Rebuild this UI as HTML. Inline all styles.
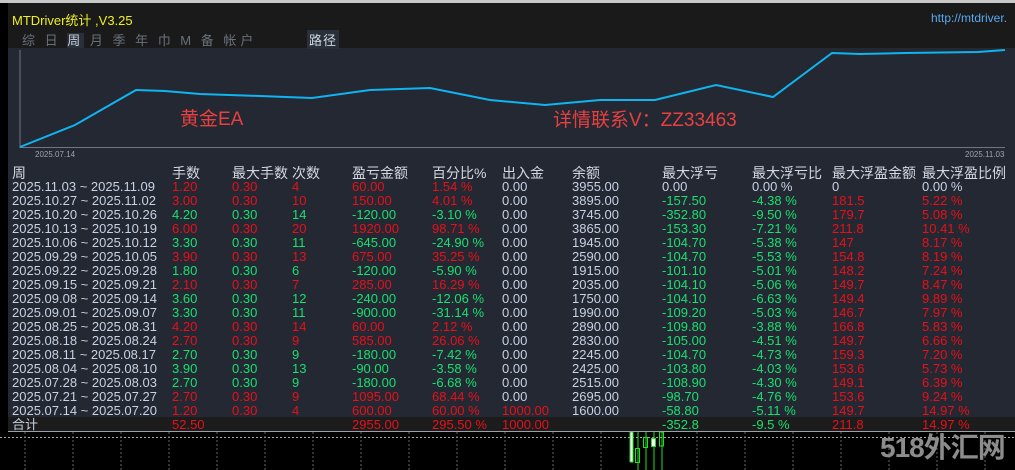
<!DOCTYPE html><html><head><meta charset="utf-8"><style>
*{margin:0;padding:0;box-sizing:border-box}
body{width:1015px;height:470px;background:#000;position:relative;overflow:hidden;font-family:"Liberation Sans","Noto Sans CJK SC",sans-serif}
.a{position:absolute}
#panel{left:8px;top:3px;width:1007px;height:429px;background:#232832;border-bottom:1px solid #9aa0a8}
.row{position:absolute;left:12px;height:14px;line-height:14px;font-size:13px;white-space:nowrap;color:#c8d2e4}
.row span{position:absolute;top:0}
.r{color:#e8101a}.g{color:#18e070}
.hd{font-size:14px;color:#d4d8e0}
.c1{left:160px}.c2{left:220px}.c3{left:280px}.c4{left:340px}.c5{left:420px}.c6{left:490px}.c7{left:560px}.c8{left:650px}.c9{left:740px}.c10{left:820px}.c11{left:910px}
</style></head><body>
<div class="a" style="left:0;top:0;width:1015px;height:3px;background:#c8c8c8"></div>
<div class="a" id="panel"></div>
<div class="a" style="left:8px;top:3px;width:1007px;height:45px;background:#1a1a1a"></div>
<div class="a" style="left:12px;top:10px;font-size:13px;color:#f0f020">MTDriver统计 ,V3.25</div>
<div class="a" style="left:931px;top:11px;font-size:12px;color:#5aa8f0">http://mtdriver.</div>
<div class="a" style="left:22px;top:30px;font-size:13px;color:#6a707a;letter-spacing:4px;word-spacing:-2px">综 日 <span style="background:#2a303a;color:#c8d0dc">周</span> 月 季 年 巾 M 备 帐户</div>
<div class="a" style="left:307px;top:30px;font-size:13px;color:#d0d6e0;background:#2a303a;padding:0 2px;letter-spacing:1px">路径</div>
<div class="a" style="left:0;top:3px;width:8px;height:429px;background:#000"></div>
<svg class="a" style="left:0;top:0" width="1015" height="170">
<line x1="20" y1="50" x2="20" y2="148" stroke="#707680"/>
<line x1="20" y1="147.5" x2="1005" y2="147.5" stroke="#707680"/>
<polyline fill="none" stroke="#10b4f0" stroke-width="2" points="20,147 75,125 136,90 165,91 200,94 260,96 312,98 370,90 430,88 490,100 545,105 600,100 655,100 716,85 773,97 832,53 860,54 905,53 978,52 1005,50"/>
<text x="35" y="157" font-size="8" fill="#a0a4aa" font-family="Liberation Sans">2025.07.14</text>
<text x="965" y="157" font-size="8" fill="#a0a4aa" font-family="Liberation Sans">2025.11.03</text>
</svg>
<div class="a" style="left:180px;top:104px;font-size:19px;color:#e84040">黄金EA</div>
<div class="a" style="left:553px;top:105px;font-size:19px;color:#e84040">详情联系V：ZZ33463</div>
<div class="row hd" style="top:165px;height:16px;line-height:16px"><span style="left:0">周</span><span class="c1">手数</span><span class="c2">最大手数</span><span class="c3">次数</span><span class="c4">盈亏金额</span><span class="c5">百分比%</span><span class="c6">出入金</span><span class="c7">余额</span><span class="c8">最大浮亏</span><span class="c9">最大浮亏比</span><span class="c10">最大浮盈金额</span><span class="c11">最大浮盈比例</span></div>
<div class="row" style="top:180px"><span>2025.11.03 ~ 2025.11.09</span><span class="c1 r">1.20</span><span class="c2 r">0.30</span><span class="c3 r">4</span><span class="c4 r">60.00</span><span class="c5 r">1.54 %</span><span class="c6">0.00</span><span class="c7">3955.00</span><span class="c8">0.00</span><span class="c9">0.00 %</span><span class="c10">0</span><span class="c11">0.00 %</span></div>
<div class="row" style="top:194px"><span>2025.10.27 ~ 2025.11.02</span><span class="c1 r">3.00</span><span class="c2 r">0.30</span><span class="c3 r">10</span><span class="c4 r">150.00</span><span class="c5 r">4.01 %</span><span class="c6">0.00</span><span class="c7">3895.00</span><span class="c8 g">-157.50</span><span class="c9 g">-4.38 %</span><span class="c10 r">181.5</span><span class="c11 r">5.22 %</span></div>
<div class="row" style="top:208px"><span>2025.10.20 ~ 2025.10.26</span><span class="c1 g">4.20</span><span class="c2 g">0.30</span><span class="c3 g">14</span><span class="c4 g">-120.00</span><span class="c5 g">-3.10 %</span><span class="c6">0.00</span><span class="c7">3745.00</span><span class="c8 g">-352.80</span><span class="c9 g">-9.50 %</span><span class="c10 r">179.7</span><span class="c11 r">5.08 %</span></div>
<div class="row" style="top:222px"><span>2025.10.13 ~ 2025.10.19</span><span class="c1 r">6.00</span><span class="c2 r">0.30</span><span class="c3 r">20</span><span class="c4 r">1920.00</span><span class="c5 r">98.71 %</span><span class="c6">0.00</span><span class="c7">3865.00</span><span class="c8 g">-153.30</span><span class="c9 g">-7.21 %</span><span class="c10 r">211.8</span><span class="c11 r">10.41 %</span></div>
<div class="row" style="top:236px"><span>2025.10.06 ~ 2025.10.12</span><span class="c1 g">3.30</span><span class="c2 g">0.30</span><span class="c3 g">11</span><span class="c4 g">-645.00</span><span class="c5 g">-24.90 %</span><span class="c6">0.00</span><span class="c7">1945.00</span><span class="c8 g">-104.70</span><span class="c9 g">-5.38 %</span><span class="c10 r">147</span><span class="c11 r">8.17 %</span></div>
<div class="row" style="top:250px"><span>2025.09.29 ~ 2025.10.05</span><span class="c1 r">3.90</span><span class="c2 r">0.30</span><span class="c3 r">13</span><span class="c4 r">675.00</span><span class="c5 r">35.25 %</span><span class="c6">0.00</span><span class="c7">2590.00</span><span class="c8 g">-104.70</span><span class="c9 g">-5.53 %</span><span class="c10 r">154.8</span><span class="c11 r">8.19 %</span></div>
<div class="row" style="top:264px"><span>2025.09.22 ~ 2025.09.28</span><span class="c1 g">1.80</span><span class="c2 g">0.30</span><span class="c3 g">6</span><span class="c4 g">-120.00</span><span class="c5 g">-5.90 %</span><span class="c6">0.00</span><span class="c7">1915.00</span><span class="c8 g">-101.10</span><span class="c9 g">-5.01 %</span><span class="c10 r">148.2</span><span class="c11 r">7.24 %</span></div>
<div class="row" style="top:278px"><span>2025.09.15 ~ 2025.09.21</span><span class="c1 r">2.10</span><span class="c2 r">0.30</span><span class="c3 r">7</span><span class="c4 r">285.00</span><span class="c5 r">16.29 %</span><span class="c6">0.00</span><span class="c7">2035.00</span><span class="c8 g">-104.10</span><span class="c9 g">-5.06 %</span><span class="c10 r">149.7</span><span class="c11 r">8.47 %</span></div>
<div class="row" style="top:292px"><span>2025.09.08 ~ 2025.09.14</span><span class="c1 g">3.60</span><span class="c2 g">0.30</span><span class="c3 g">12</span><span class="c4 g">-240.00</span><span class="c5 g">-12.06 %</span><span class="c6">0.00</span><span class="c7">1750.00</span><span class="c8 g">-104.10</span><span class="c9 g">-6.63 %</span><span class="c10 r">149.4</span><span class="c11 r">9.89 %</span></div>
<div class="row" style="top:306px"><span>2025.09.01 ~ 2025.09.07</span><span class="c1 g">3.30</span><span class="c2 g">0.30</span><span class="c3 g">11</span><span class="c4 g">-900.00</span><span class="c5 g">-31.14 %</span><span class="c6">0.00</span><span class="c7">1990.00</span><span class="c8 g">-109.20</span><span class="c9 g">-5.03 %</span><span class="c10 r">146.7</span><span class="c11 r">7.97 %</span></div>
<div class="row" style="top:320px"><span>2025.08.25 ~ 2025.08.31</span><span class="c1 r">4.20</span><span class="c2 r">0.30</span><span class="c3 r">14</span><span class="c4 r">60.00</span><span class="c5 r">2.12 %</span><span class="c6">0.00</span><span class="c7">2890.00</span><span class="c8 g">-109.80</span><span class="c9 g">-3.88 %</span><span class="c10 r">166.8</span><span class="c11 r">5.83 %</span></div>
<div class="row" style="top:334px"><span>2025.08.18 ~ 2025.08.24</span><span class="c1 r">2.70</span><span class="c2 r">0.30</span><span class="c3 r">9</span><span class="c4 r">585.00</span><span class="c5 r">26.06 %</span><span class="c6">0.00</span><span class="c7">2830.00</span><span class="c8 g">-105.00</span><span class="c9 g">-4.51 %</span><span class="c10 r">149.7</span><span class="c11 r">6.66 %</span></div>
<div class="row" style="top:348px"><span>2025.08.11 ~ 2025.08.17</span><span class="c1 g">2.70</span><span class="c2 g">0.30</span><span class="c3 g">9</span><span class="c4 g">-180.00</span><span class="c5 g">-7.42 %</span><span class="c6">0.00</span><span class="c7">2245.00</span><span class="c8 g">-104.70</span><span class="c9 g">-4.73 %</span><span class="c10 r">159.3</span><span class="c11 r">7.20 %</span></div>
<div class="row" style="top:362px"><span>2025.08.04 ~ 2025.08.10</span><span class="c1 g">3.90</span><span class="c2 g">0.30</span><span class="c3 g">13</span><span class="c4 g">-90.00</span><span class="c5 g">-3.58 %</span><span class="c6">0.00</span><span class="c7">2425.00</span><span class="c8 g">-103.80</span><span class="c9 g">-4.03 %</span><span class="c10 r">153.6</span><span class="c11 r">5.73 %</span></div>
<div class="row" style="top:376px"><span>2025.07.28 ~ 2025.08.03</span><span class="c1 g">2.70</span><span class="c2 g">0.30</span><span class="c3 g">9</span><span class="c4 g">-180.00</span><span class="c5 g">-6.68 %</span><span class="c6">0.00</span><span class="c7">2515.00</span><span class="c8 g">-108.90</span><span class="c9 g">-4.30 %</span><span class="c10 r">149.1</span><span class="c11 r">6.39 %</span></div>
<div class="row" style="top:390px"><span>2025.07.21 ~ 2025.07.27</span><span class="c1 r">2.70</span><span class="c2 r">0.30</span><span class="c3 r">9</span><span class="c4 r">1095.00</span><span class="c5 r">68.44 %</span><span class="c6">0.00</span><span class="c7">2695.00</span><span class="c8 g">-98.70</span><span class="c9 g">-4.76 %</span><span class="c10 r">153.6</span><span class="c11 r">9.24 %</span></div>
<div class="row" style="top:404px"><span>2025.07.14 ~ 2025.07.20</span><span class="c1 r">1.20</span><span class="c2 r">0.30</span><span class="c3 r">4</span><span class="c4 r">600.00</span><span class="c5 r">60.00 %</span><span class="c6 r">1000.00</span><span class="c7">1600.00</span><span class="c8 g">-58.80</span><span class="c9 g">-5.11 %</span><span class="c10 r">149.7</span><span class="c11 r">14.97 %</span></div>
<div class="a" style="left:8px;top:417px;width:1007px;height:14px;background:#1c1c1c"></div>
<div class="row" style="top:418px"><span>合计</span><span class="c1 r">52.50</span><span class="c4 r">2955.00</span><span class="c5 r">295.50 %</span><span class="c6 r">1000.00</span><span class="c8 g">-352.8</span><span class="c9 g">-9.5 %</span><span class="c10 r">211.8</span><span class="c11 r">14.97 %</span></div>
<svg class="a" style="left:0;top:432px" width="1015" height="38">
<line x1="0" y1="5.5" x2="1015" y2="5.5" stroke="#aaa" stroke-dasharray="2,2"/>
<g stroke="#666" stroke-dasharray="2,2">
<line x1="25" y1="0" x2="25" y2="38"/><line x1="73" y1="0" x2="73" y2="38"/><line x1="121" y1="0" x2="121" y2="38"/><line x1="169" y1="0" x2="169" y2="38"/><line x1="217" y1="0" x2="217" y2="38"/><line x1="265" y1="0" x2="265" y2="38"/><line x1="313" y1="0" x2="313" y2="38"/><line x1="361" y1="0" x2="361" y2="38"/><line x1="409" y1="0" x2="409" y2="38"/><line x1="457" y1="0" x2="457" y2="38"/><line x1="505" y1="0" x2="505" y2="38"/><line x1="553" y1="0" x2="553" y2="38"/><line x1="601" y1="0" x2="601" y2="38"/><line x1="697" y1="0" x2="697" y2="38"/><line x1="745" y1="0" x2="745" y2="38"/><line x1="793" y1="0" x2="793" y2="38"/><line x1="841" y1="0" x2="841" y2="38"/><line x1="889" y1="0" x2="889" y2="38"/><line x1="937" y1="0" x2="937" y2="38"/><line x1="985" y1="0" x2="985" y2="38"/></g>
<g stroke="#20e020" fill="none"><rect x="630" y="0" width="3" height="30" fill="#fff"/><line x1="638" y1="0" x2="638" y2="38"/><rect x="635.5" y="16.5" width="4" height="14"/><line x1="646" y1="0" x2="646" y2="38"/><rect x="643.5" y="5.5" width="4" height="10"/><line x1="654" y1="0" x2="654" y2="38"/><rect x="651.5" y="6.5" width="4" height="8" fill="#fff"/><line x1="662" y1="0" x2="662" y2="38"/><rect x="659.5" y="0" width="4" height="14"/></g>
</svg>
<div class="a" style="left:880px;top:431px;font-size:28px;line-height:34px;font-weight:bold;color:#8c8c8c;letter-spacing:-1px">518外汇网</div>
</body></html>
